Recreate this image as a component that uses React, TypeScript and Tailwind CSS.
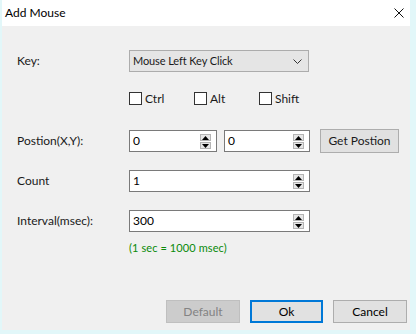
import React from 'react';

const Spinner: React.FC = () => (
  <div className="absolute right-[5px] top-[3px] flex flex-col gap-px">
    <div className="flex h-[7px] w-[11px] items-center justify-center border border-[#b4b4b4] bg-[#e6e6e6]">
      <svg width="7" height="4" viewBox="0 0 7 4"><path d="M0 4 L3.5 0 L7 4 Z" fill="#000" /></svg>
    </div>
    <div className="flex h-[7px] w-[11px] items-center justify-center border border-[#b4b4b4] bg-[#e6e6e6]">
      <svg width="7" height="4" viewBox="0 0 7 4"><path d="M0 0 L3.5 4 L7 0 Z" fill="#000" /></svg>
    </div>
  </div>
);

const NumberField: React.FC<{ value: string; width: string }> = ({ value, width }) => (
  <div className={`relative flex h-[22px] ${width} items-center border border-[#7a7a7a] bg-white pl-[3px] text-[12px] text-black`}>
    {value}
    <Spinner />
  </div>
);

const Check: React.FC<{ label: string; width: string }> = ({ label, width }) => (
  <div className={`flex ${width} items-center gap-[3px]`}>
    <div className="h-[13px] w-[13px] border border-[#333] bg-white" />
    <span>{label}</span>
  </div>
);

const Row: React.FC<{ label: string; children: React.ReactNode; className?: string }> = ({ label, children, className }) => (
  <div className={`flex h-[22px] items-center ${className ?? ''}`}>
    <span className="w-[112px]">{label}</span>
    {children}
  </div>
);

export default function App() {
  return (
    <div className="h-[334px] w-[416px] overflow-hidden bg-[#e2f7f9]" style={{ fontFamily: 'Lato, "Noto Sans", sans-serif' }}>
      <div className="ml-[2px] flex h-[330px] w-[408px] flex-col bg-[#f0f0f0] text-[12px] text-[#1a1a1a]">
        {/* title bar */}
        <div className="flex h-[26px] items-center justify-between bg-white pl-[3px] pr-[6px]">
          <span className="text-[12px] text-black">Add Mouse</span>
          <svg width="10" height="10" viewBox="0 0 10 10">
            <path d="M0.5 0.5 L9.5 9.5 M9.5 0.5 L0.5 9.5" stroke="#111" strokeWidth="1" />
          </svg>
        </div>

        <div className="flex flex-1 flex-col pl-[15px]">
          <Row label="Key:" className="mt-[24px]">
            <div className="flex h-[22px] w-[180px] items-center justify-between border border-[#acacac] bg-[#e5e5e5] pl-[3px] pr-[6px]">
              <span className="text-[11px] tracking-[-0.1px]">Mouse Left Key Click</span>
              <svg width="9" height="5" viewBox="0 0 9 5"><path d="M0.5 0.5 L4.5 4.5 L8.5 0.5" stroke="#333" fill="none" /></svg>
            </div>
          </Row>

          <div className="mt-[20px] flex h-[13px] items-center pl-[112px]">
            <Check label="Ctrl" width="w-[65px]" />
            <Check label="Alt" width="w-[65px]" />
            <Check label="Shift" width="w-[60px]" />
          </div>

          <Row label="Postion(X,Y):" className="mt-[25px]">
            <NumberField value="0" width="w-[88px]" />
            <div className="ml-[7px]">
              <NumberField value="0" width="w-[86px]" />
            </div>
            <button className="ml-[10px] h-[24px] w-[79px] border border-[#adadad] bg-[#e1e1e1] text-[12px]">Get Postion</button>
          </Row>

          <Row label="Count" className="mt-[18px]">
            <NumberField value="1" width="w-[181px]" />
          </Row>

          <Row label="Interval(msec):" className="mt-[18px]">
            <NumberField value="300" width="w-[181px]" />
          </Row>

          <div className="mt-[8px] pl-[112px] text-[11px] leading-[16px] tracking-[0.1px] text-[#0a8a0a]">(1 sec = 1000 msec)</div>

          <div className="mt-auto mb-[7px] flex justify-end gap-[10px] pr-[3px]">
            <button className="h-[23px] w-[74px] border border-[#bfbfbf] bg-[#cccccc] text-[#838383]">Default</button>
            <button className="h-[23px] w-[73px] border-2 border-[#0078d7] bg-[#e1e1e1] text-black">Ok</button>
            <button className="h-[23px] w-[74px] border border-[#adadad] bg-[#e1e1e1] text-black">Cancel</button>
          </div>
        </div>
      </div>
    </div>
  );
}
